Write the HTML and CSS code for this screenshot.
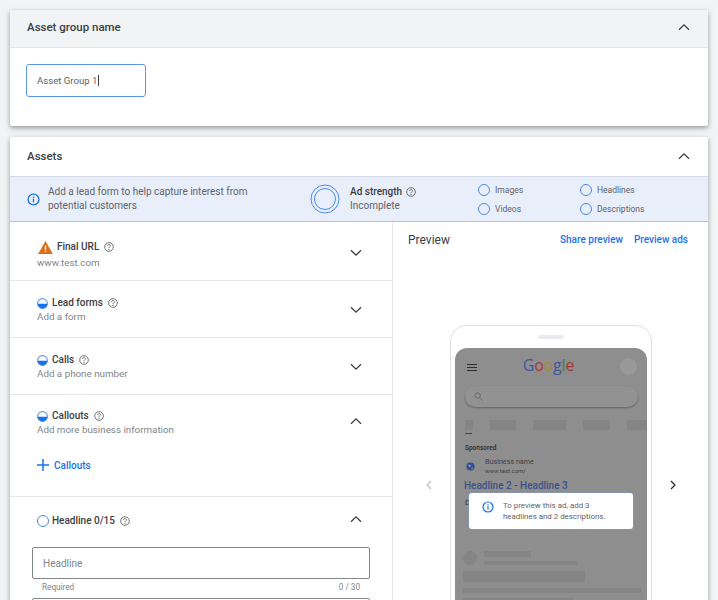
FILE: index.html
```html
<!DOCTYPE html>
<html lang="en">
<head>
    <meta charset="UTF-8">
    <meta name="viewport" content="width=device-width, initial-scale=1.0">
    <title>Asset group</title>
    <link rel="stylesheet" href="styles.css">
</head>
<body>

    <svg width="0" height="0" class="defs">
        <symbol id="chev-down" viewBox="0 0 12 8"><path d="M1 1.2l5 5 5-5" fill="none" stroke="#3c4043" stroke-width="1.3"/></symbol>
        <symbol id="chev-up" viewBox="0 0 12 8"><path d="M1 6.8l5-5 5 5" fill="none" stroke="#3c4043" stroke-width="1.3"/></symbol>
        <symbol id="help" viewBox="0 0 10 10"><circle cx="5" cy="5" r="4.3" fill="none" stroke="#5f6368" stroke-width=".9"/><path d="M3.6 4c0-1.900 2.800-1.900 2.800-.2 0 1.100-1.400 1-1.400 2.300" fill="none" stroke="#5f6368" stroke-width=".9"/><circle cx="5" cy="7.400" r=".55" fill="#5f6368"/></symbol>
        <symbol id="half" viewBox="0 0 12 12"><circle cx="6" cy="6" r="5.300" fill="#fff" stroke="#1a73e8"/><path d="M.7 6.200h10.600a5.300 5.300 0 0 1-10.600 0z" fill="#1a73e8"/></symbol>
        <symbol id="info" viewBox="0 0 12 12"><circle cx="6" cy="6" r="5" fill="none" stroke="#1a73e8" stroke-width="1.200"/><rect x="5.400" y="5.200" width="1.200" height="3.400" fill="#1a73e8"/><rect x="5.400" y="3.200" width="1.200" height="1.200" fill="#1a73e8"/></symbol>
    </svg>

    <div class="card name-card">
        <div class="card-head grey">
            <span>Asset group name</span>
            <svg class="chev"><use href="#chev-up"/></svg>
        </div>
        <div class="name-body">
            <div class="name-input">Asset Group 1<i class="caret"></i></div>
        </div>
    </div>

    <div class="card assets-card">
        <div class="card-head">
            <span>Assets</span>
            <svg class="chev"><use href="#chev-up"/></svg>
        </div>

        <div class="banner">
            <svg class="banner-info"><use href="#info"/></svg>
            <p class="banner-text">Add a lead form to help capture interest from<br>potential customers</p>
            <svg class="ring" viewBox="0 0 30 30"><circle cx="15" cy="15" r="14" fill="none" stroke="#4a8be8"/><circle cx="15" cy="15" r="10.500" fill="none" stroke="#4a8be8"/></svg>
            <div class="strength">
                <div class="strength-title">Ad strength <svg class="help"><use href="#help"/></svg></div>
                <div>Incomplete</div>
            </div>
            <div class="checks">
                <span><i></i>Images</span>
                <span><i></i>Headlines</span>
                <span><i></i>Videos</span>
                <span><i></i>Descriptions</span>
            </div>
        </div>

        <div class="columns">
            <div class="left">
                <div class="row row-url">
                    <div>
                        <div class="row-title">
                            <svg class="warn" viewBox="0 0 16 14"><path d="M8 0l8 14H0z" fill="#d9701a"/><rect x="7.300" y="5" width="1.400" height="4.500" fill="#fff"/><rect x="7.300" y="10.500" width="1.400" height="1.400" fill="#fff"/></svg>
                            Final URL <svg class="help"><use href="#help"/></svg>
                        </div>
                        <div class="row-sub">www.test.com</div>
                    </div>
                    <svg class="chev"><use href="#chev-down"/></svg>
                </div>
                <div class="row">
                    <div>
                        <div class="row-title"><svg class="half"><use href="#half"/></svg>Lead forms <svg class="help"><use href="#help"/></svg></div>
                        <div class="row-sub">Add a form</div>
                    </div>
                    <svg class="chev"><use href="#chev-down"/></svg>
                </div>
                <div class="row">
                    <div>
                        <div class="row-title"><svg class="half"><use href="#half"/></svg>Calls <svg class="help"><use href="#help"/></svg></div>
                        <div class="row-sub">Add a phone number</div>
                    </div>
                    <svg class="chev"><use href="#chev-down"/></svg>
                </div>
                <div class="row row-open">
                    <div class="row-top">
                        <div>
                            <div class="row-title"><svg class="half"><use href="#half"/></svg>Callouts <svg class="help"><use href="#help"/></svg></div>
                            <div class="row-sub">Add more business information</div>
                        </div>
                        <svg class="chev"><use href="#chev-up"/></svg>
                    </div>
                    <div class="add-link">
                        <svg class="plus" viewBox="0 0 12 12"><path d="M6 0v12M0 6h12" stroke="#1a73e8" stroke-width="1.500"/></svg>
                        Callouts
                    </div>
                </div>
                <div class="headline">
                    <div class="row-top">
                        <div class="row-title"><i class="empty"></i>Headline 0/15 <svg class="help"><use href="#help"/></svg></div>
                        <svg class="chev"><use href="#chev-up"/></svg>
                    </div>
                    <div class="field">Headline</div>
                    <div class="field-note"><span>Required</span><span>0 / 30</span></div>
                    <div class="field"></div>
                </div>
            </div>

            <div class="right">
                <div class="preview-head">
                    <span class="preview-title">Preview</span>
                    <span class="preview-links"><a href="#">Share preview</a><a href="#">Preview ads</a></span>
                </div>
                <div class="stage">
                    <svg class="arrow" viewBox="0 0 6 10"><path d="M5 1L1 5l4 4" fill="none" stroke="#bdc1c6" stroke-width="1.200"/></svg>
                    <div class="phone">
                        <div class="speaker"></div>
                        <div class="screen">
                            <div class="top">
                                <div class="burger"><i></i><i></i><i></i></div>
                                <div class="logo"><span class="g1">G</span><span class="g2">o</span><span class="g3">o</span><span class="g1">g</span><span class="g4">l</span><span class="g2">e</span></div>
                                <div class="avatar"></div>
                            </div>
                            <div class="search">
                                <svg viewBox="0 0 10 10"><circle cx="4" cy="4" r="3" fill="none" stroke="#666"/><path d="M6.200 6.200L9.500 9.500" stroke="#666"/></svg>
                            </div>
                            <div class="chips"><i class="c1"></i><i class="c2"></i><i class="c3"></i><i class="c4"></i><i class="c5"></i></div>
                            <div class="dash"></div>
                            <div class="sponsored">Sponsored</div>
                            <div class="biz">
                                <svg viewBox="0 0 10 10"><circle cx="5" cy="5" r="4.500" fill="#2f4f8f"/><path d="M3 2.500l2.500 1-1 2.500-1.500-1zM6 6l2 .5-1.500 2z" fill="#8f9bb0"/></svg>
                                <div>
                                    <div class="biz-name">Business name</div>
                                    <div class="biz-url">www.test.com/</div>
                                </div>
                            </div>
                            <div class="ad-title">Headline 2 - Headline 3</div>
                            <div class="ad-desc">D</div>
                            <div class="skeleton">
                                <div class="sk-person">
                                    <i class="sk-circle"></i>
                                    <div><i class="sk-a"></i><i class="sk-b"></i></div>
                                </div>
                                <i class="sk-c"></i>
                                <i class="sk-d"></i>
                                <i class="sk-e"></i>
                            </div>
                        </div>
                        <div class="tip">
                            <svg><use href="#info"/></svg>
                            <p>To preview this ad, add 3<br>headlines and 2 descriptions.</p>
                        </div>
                    </div>
                    <svg class="arrow" viewBox="0 0 6 10"><path d="M1 1l4 4-4 4" fill="none" stroke="#202124" stroke-width="1.200"/></svg>
                </div>
            </div>
        </div>
    </div>

</body>
</html>
```

FILE: styles.css
```css
html, body {
    height: 600px;
    overflow: hidden;
}

body {
    background-color: #f1f3f4;
    font-family: Roboto, Arial, sans-serif;
    color: #3c4043;
    margin: 0;
    padding: 10px 10px 0;
    box-sizing: border-box;
}

.defs {
    display: block;
    height: 0;
}

.card {
    background-color: #fff;
    border-radius: 2px;
    box-shadow: 0 2px 5px rgba(60, 64, 67, 0.5);
}

.name-card {
    height: 116px;
    margin-bottom: 11px;
}

.card-head {
    height: 39px;
    box-sizing: border-box;
    display: flex;
    justify-content: space-between;
    align-items: center;
    padding: 0 18px 2px 17px;
    font-size: 11.500px;
    font-weight: 500;
    color: #3c4043;
}

.card-head.grey {
    height: 38px;
    padding-bottom: 3px;
    background-color: #f1f3f4;
    border-bottom: 1px solid #e4e6e8;
}

.chev {
    width: 12px;
    height: 8px;
    flex: none;
}

.name-body {
    padding: 16px;
}

.name-input {
    width: 120px;
    height: 33px;
    box-sizing: border-box;
    border: 1px solid #5a96e3;
    border-radius: 3px;
    line-height: 31px;
    padding-left: 10px;
    font-size: 9.600px;
    color: #5f6368;
}

.caret {
    display: inline-block;
    width: 1px;
    height: 11px;
    background-color: #3c4043;
    vertical-align: -2px;
    margin-left: 1px;
}

.assets-card {
    height: 480px;
}

.banner {
    height: 46px;
    box-sizing: border-box;
    background-color: #e8effb;
    border-top: 1px solid #d4dbe6;
    border-bottom: 1px solid #b9c0cb;
    display: flex;
    align-items: center;
    font-size: 10px;
    color: #5f6368;
    line-height: 14px;
}

.banner-info {
    width: 13px;
    height: 13px;
    margin-left: 17px;
    flex: none;
}

.banner-text {
    margin: 0 0 0 8px;
    width: 262px;
    flex: none;
}

.ring {
    width: 30px;
    height: 30px;
    flex: none;
}

.strength {
    margin-left: 10px;
    width: 128px;
    flex: none;
}

.strength-title {
    color: #3c4043;
    font-weight: 500;
    display: flex;
    align-items: center;
    gap: 4px;
}

.help {
    width: 10px;
    height: 10px;
    flex: none;
}

.checks {
    display: grid;
    grid-template-columns: 102px 1fr;
    row-gap: 5px;
    font-size: 8.500px;
}

.checks span {
    display: flex;
    align-items: center;
    line-height: 14px;
}

.checks i {
    width: 10px;
    height: 10px;
    border: 1px solid #4a8be0;
    border-radius: 50%;
    margin-right: 5px;
}

.columns {
    display: flex;
}

.left {
    width: 383px;
    flex: none;
    border-right: 1px solid #e4e6e8;
    box-sizing: border-box;
    height: 378px;
    overflow: hidden;
}

.row {
    height: 57px;
    box-sizing: border-box;
    border-bottom: 1px solid #e4e6e8;
    display: flex;
    justify-content: space-between;
    align-items: center;
    padding: 2px 30px 0 27px;
}

.row-url {
    height: 59px;
    padding-top: 4px;
}

.row-url .row-title {
    margin-top: 4px;
}

.row-open {
    height: 102px;
    display: block;
    padding-top: 14px;
}

.row-top {
    display: flex;
    justify-content: space-between;
    align-items: center;
}

.row-top .chev {
    margin-bottom: 4px;
}

.row-title {
    font-size: 10px;
    font-weight: 500;
    line-height: 14px;
    color: #3c4043;
    display: flex;
    align-items: center;
    gap: 5px;
}

.row-sub {
    font-size: 9.800px;
    line-height: 14px;
    color: #80868b;
}

.row-url .row-sub {
    margin-top: 2px;
}

.warn {
    width: 15px;
    height: 13px;
    margin: 0 -1px 0 1px;
}

.half {
    width: 11px;
    height: 11px;
    margin-right: -1px;
}

.add-link {
    display: flex;
    align-items: center;
    gap: 5px;
    margin-top: 22px;
    font-size: 10px;
    font-weight: 500;
    color: #1a73e8;
}

.plus {
    width: 12px;
    height: 12px;
}

.headline {
    padding: 17px 22px 0;
}

.headline .row-top {
    padding: 0 8px 0 5px;
}

.empty {
    width: 10px;
    height: 10px;
    border: 1px solid #4a8be0;
    border-radius: 50%;
    margin-right: -2px;
}

.field {
    margin-top: 19px;
    height: 32px;
    box-sizing: border-box;
    border: 1px solid #80868b;
    border-radius: 2px;
    font-size: 10px;
    line-height: 31px;
    padding-left: 10px;
    color: #80868b;
}

.field-note {
    display: flex;
    justify-content: space-between;
    font-size: 8.200px;
    line-height: 14px;
    color: #80868b;
    padding: 1px 10px 0;
}

.field-note + .field {
    margin-top: 4px;
}

.right {
    flex: 1;
    min-width: 0;
}

.preview-head {
    display: flex;
    justify-content: space-between;
    align-items: center;
    padding: 10px 20px 0 15px;
}

.preview-title {
    font-size: 12px;
    line-height: 16px;
    color: #3c4043;
}

.preview-links {
    display: flex;
    gap: 11px;
    font-size: 10px;
    line-height: 16px;
}

.preview-links a {
    font-weight: 500;
    color: #1a73e8;
    text-decoration: none;
}

.stage {
    display: flex;
    align-items: flex-start;
    gap: 18px;
    padding: 77px 0 0 33px;
}

.arrow {
    width: 6px;
    height: 10px;
    margin-top: 155px;
    flex: none;
}

.phone {
    width: 202px;
    height: 300px;
    flex: none;
    box-sizing: border-box;
    border: 1px solid #e0e0e0;
    border-radius: 16px 16px 0 0;
    padding: 22px 4px 0;
    position: relative;
}

.speaker {
    position: absolute;
    top: 9px;
    left: 87px;
    width: 26px;
    height: 4px;
    border-radius: 2px;
    background-color: #e8eaed;
}

.screen {
    height: 278px;
    background-color: #8e8e8e;
    border-radius: 12px 12px 0 0;
    overflow: hidden;
}

.top {
    display: flex;
    align-items: center;
    justify-content: space-between;
    padding: 8px 10px 0 12px;
}

.burger {
    width: 10px;
    margin-top: 4px;
}

.burger i {
    display: block;
    height: 1px;
    background-color: #2e2e2e;
    margin-bottom: 2px;
}

.logo {
    font-family: "Open Sans", sans-serif;
    font-size: 16px;
    line-height: 18px;
    letter-spacing: -0.2px;
    margin-bottom: 2px;
}

.g1 { color: #3f5a9e; }
.g2 { color: #a33a35; }
.g3 { color: #a88a2a; }
.g4 { color: #3f7f4a; }

.avatar {
    width: 17px;
    height: 17px;
    border-radius: 50%;
    background-color: #999;
}

.search {
    margin: 10px 9px 0 10px;
    height: 21px;
    border-radius: 11px;
    background-color: #929292;
    box-shadow: 0 1px 2px rgba(0, 0, 0, 0.3);
    display: flex;
    align-items: center;
    padding-left: 9px;
}

.search svg {
    width: 9px;
    height: 9px;
}

.chips {
    display: flex;
    gap: 17px;
    margin: 13px 0 0 10px;
}

.chips i {
    flex: none;
    height: 10px;
    background-color: #858585;
}

.chips .c1 { width: 8px; }
.chips .c2 { width: 26px; }
.chips .c3 { width: 33px; }
.chips .c4 { width: 27px; }
.chips .c5 { width: 30px; }

.dash {
    width: 7px;
    height: 1px;
    background-color: #444;
    margin: 3px 0 0 10px;
}

.sponsored {
    font-size: 6.500px;
    font-weight: 500;
    color: #2a2a2a;
    margin: 10px 0 0 10px;
    line-height: 9px;
}

.biz {
    display: flex;
    align-items: center;
    gap: 10px;
    margin: 4px 0 0 11px;
}

.biz svg {
    width: 9px;
    height: 9px;
    flex: none;
}

.biz-name {
    font-size: 7.200px;
    line-height: 10px;
    color: #404040;
}

.biz-url {
    font-size: 6px;
    line-height: 8px;
    color: #404040;
}

.ad-title {
    font-size: 10px;
    font-weight: 500;
    line-height: 14px;
    color: #3a5288;
    margin: 4px 0 0 9px;
}

.ad-desc {
    font-size: 8px;
    line-height: 10px;
    color: #303030;
    margin: 5px 0 0 10px;
}

.skeleton {
    padding: 43px 6px 0 8px;
}

.sk-person {
    display: flex;
    gap: 7px;
    align-items: center;
}

.sk-circle {
    width: 14px;
    height: 14px;
    border-radius: 50%;
    background-color: #858585;
    flex: none;
}

.sk-a, .sk-b, .sk-c, .sk-d, .sk-e {
    display: block;
    background-color: #858585;
}

.sk-a { width: 47px; height: 6px; margin-bottom: 4px; }
.sk-b { width: 93px; height: 4px; }
.sk-c { width: 122px; height: 11px; margin-top: 6px; }
.sk-d { width: 178px; height: 5px; margin-top: 6px; }
.sk-e { width: 110px; height: 5px; margin-top: 5px; }

.tip {
    position: absolute;
    left: 18px;
    top: 167px;
    width: 164px;
    height: 36px;
    box-sizing: border-box;
    background-color: #fff;
    border-radius: 3px;
    box-shadow: 0 0 0 1px rgba(120, 160, 230, 0.4);
    display: flex;
    align-items: center;
    padding-left: 13px;
    gap: 9px;
    font-size: 7.900px;
    line-height: 11px;
    color: #5f6368;
}

.tip svg {
    width: 12px;
    height: 12px;
    flex: none;
    margin-top: -8px;
}

.tip p {
    margin: 0;
}
```
